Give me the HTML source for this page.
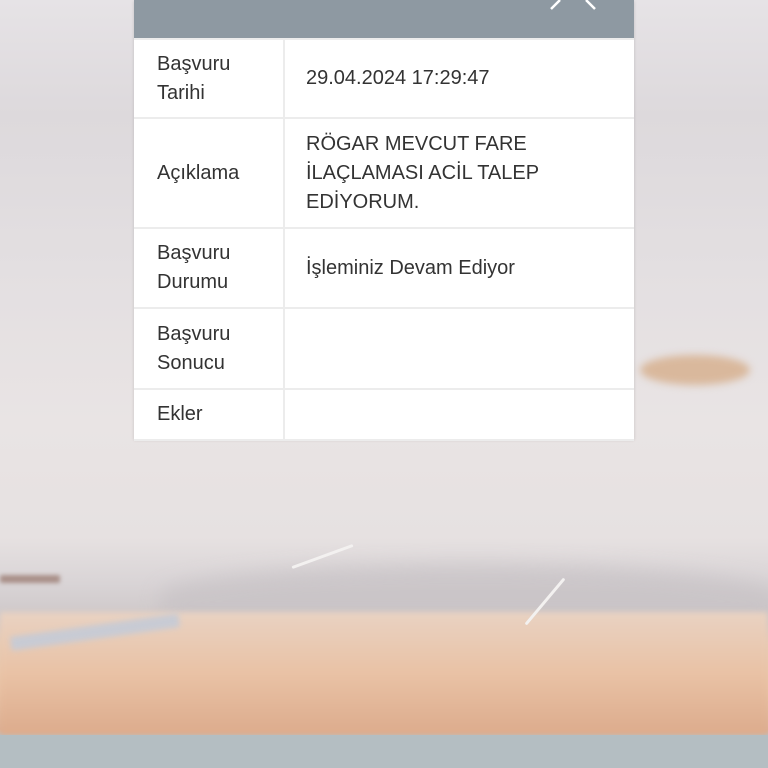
<!DOCTYPE html>
<html><head><meta charset="utf-8"><style>
html,body{margin:0;padding:0;width:768px;height:768px;overflow:hidden}
body{position:relative;font-family:"Liberation Sans",sans-serif;
background:linear-gradient(180deg,#e6e3e6 0%,#ddd9dc 15%,#e3dfe1 35%,#e9e4e4 55%,#e6e1e1 70%,#d9d4d6 76%,#cfc9ca 80%,#e8cbb3 84%,#e9c4a6 90%,#dcb196 95%,#b9c1c4 95.8%,#aab4b8 100%);}
.hill{position:absolute;left:160px;top:565px;width:620px;height:60px;background:#c8c3c6;border-radius:50% 50% 0 0;filter:blur(10px);opacity:.8}
.city{position:absolute;left:0;top:612px;width:768px;height:123px;background:linear-gradient(180deg,#e9d2c2,#e9c2a5 50%,#dcab8c);filter:blur(3px)}
.water{position:absolute;left:0;top:735px;width:768px;height:33px;background:#b4bec2}
.bird{position:absolute;height:3px;background:#f3f1f0;border-radius:2px}
.card{position:absolute;left:134px;top:0;width:500px;height:439px;background:#fff;box-shadow:0 1px 3px rgba(0,0,0,.15)}
.hdr{height:38px;background:#8e99a2;position:relative}
table{border-collapse:collapse;width:500px;color:#333;font-size:20px;line-height:29px}
td{border:2px solid #ececec;vertical-align:middle;padding:0}
td.l{width:126px;padding-left:23px}
td.v{padding-left:21px}
tr td:first-child{border-left:none}tr td:last-child{border-right:none}
</style></head><body>
<div class="hill"></div>
<div class="city"></div>
<div class="water"></div>
<div class="bird" style="left:640px;top:355px;width:110px;height:30px;background:#d9b89c;border-radius:50%;filter:blur(4px)"></div>
<div class="bird" style="left:0;top:575px;width:60px;height:8px;background:#a99089;filter:blur(2px)"></div>
<div class="bird" style="left:10px;top:625px;width:170px;height:14px;background:#c8cbd4;filter:blur(3px);transform:rotate(-8deg)"></div>
<div class="bird" style="left:290px;top:555px;width:65px;transform:rotate(-20deg)"></div>
<div class="bird" style="left:515px;top:600px;width:60px;transform:rotate(-50deg)"></div>
<div class="card">
<div class="hdr"><svg width="50" height="10" style="position:absolute;left:414px;top:0" viewBox="0 0 50 10"><path d="M3 9L12 0M38 0L47 9" stroke="#fff" stroke-width="2.5" fill="none"/></svg></div>
<table>
<tr style="height:79px"><td class="l">Başvuru<br>Tarihi</td><td class="v">29.04.2024 17:29:47</td></tr>
<tr style="height:110px"><td class="l">Açıklama</td><td class="v">RÖGAR MEVCUT FARE<br>İLAÇLAMASI ACİL TALEP<br>EDİYORUM.</td></tr>
<tr style="height:80px"><td class="l">Başvuru<br>Durumu</td><td class="v" style="vertical-align:top;padding-top:25px">İşleminiz Devam Ediyor</td></tr>
<tr style="height:81px"><td class="l">Başvuru<br>Sonucu</td><td class="v"></td></tr>
<tr style="height:51px"><td class="l">Ekler</td><td class="v"></td></tr>
</table>
</div>
</body></html>
